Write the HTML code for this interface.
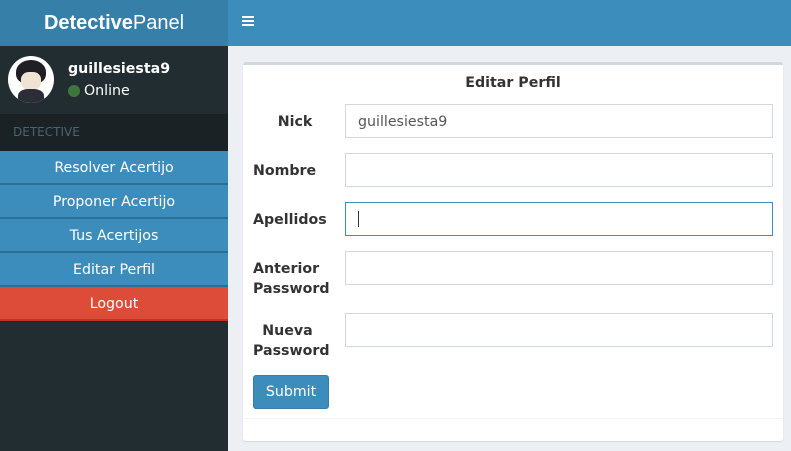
<!DOCTYPE html>
<html><head><style>
*{box-sizing:border-box;margin:0;padding:0}
body{width:791px;height:451px;overflow:hidden;background:#ecf0f5;font-family:"DejaVu Sans",sans-serif;font-size:14px;color:#333;position:relative}
.abs{position:absolute}
.logo{left:0;top:0;width:228px;height:46px;background:#367fa9;color:#fff;font-family:"Liberation Sans",sans-serif;font-size:20px;text-align:center;line-height:46px}
.nav{left:228px;top:0;right:0;height:46px;background:#3c8dbc}
.side{left:0;top:46px;width:228px;bottom:0;background:#222d32}
.hdr{left:0;top:114px;width:228px;height:37px;background:#1a2226;color:#4b646f;font-size:12px;padding-left:13px;line-height:36px}
.mi{left:0;width:228px;height:34px;background:#3c8dbc;color:#fff;text-align:center;line-height:34px;border-bottom:2px solid #2a6f98;font-size:14.2px}
.box{left:243px;top:62px;width:540px;height:379px;background:#fff;border-top:3px solid #d2d6de;border-radius:3px;box-shadow:0 1px 1px rgba(0,0,0,.1)}
.in{left:345px;width:428px;height:34px;border:1px solid #d2d6de;background:#fff;padding-left:12px;line-height:34px;color:#555;font-size:14.2px}
.lb{font-weight:bold;text-align:center;width:84px;left:245px;line-height:20px;font-size:14.2px}
</style></head><body>
<div class="abs logo"><b>Detective</b>Panel</div>
<div class="abs nav"><div class="abs" style="left:14px;top:16px;width:12px">
<div style="height:2px;background:#fff;margin-bottom:2px"></div><div style="height:2px;background:#fff;margin-bottom:2px"></div><div style="height:2px;background:#fff"></div></div></div>
<div class="abs side"></div>
<div class="abs" style="left:8px;top:56px;width:46px;height:47px;border-radius:50%;background:#fff;overflow:hidden">
<div class="abs" style="left:8px;top:4px;width:30px;height:24px;border-radius:50% 50% 40% 40%;background:#1f1f25"></div>
<div class="abs" style="left:13px;top:16px;width:20px;height:18px;border-radius:40%;background:#f1e3d3"></div>
<div class="abs" style="left:10px;top:33px;width:26px;height:16px;background:#2b2e38;border-radius:40% 40% 0 0"></div></div>
<div class="abs" style="left:68px;top:61px;color:#fff;font-weight:bold;font-size:14.2px">guillesiesta9</div>
<div class="abs" style="left:68px;top:85px;width:12px;height:12px;border-radius:50%;background:#3c763d"></div>
<div class="abs" style="left:84px;top:83px;color:#fff;font-size:14.2px">Online</div>
<div class="abs hdr">DETECTIVE</div>
<div class="abs mi" style="top:151px">Resolver Acertijo</div>
<div class="abs mi" style="top:185px">Proponer Acertijo</div>
<div class="abs mi" style="top:219px">Tus Acertijos</div>
<div class="abs mi" style="top:253px">Editar Perfil</div>
<div class="abs mi" style="top:287px;background:#dd4b39;border-bottom-color:#c23321">Logout</div>
<div class="abs box"></div>
<div class="abs" style="left:243px;width:540px;top:75px;text-align:center;font-weight:bold;font-size:14.2px">Editar Perfil</div>
<div class="abs lb" style="top:112px;left:253px;width:84px">Nick</div>
<div class="abs in" style="top:104px">guillesiesta9</div>
<div class="abs lb" style="top:161px;left:253px;width:auto">Nombre</div>
<div class="abs in" style="top:153px"></div>
<div class="abs lb" style="top:210px;left:253px;width:auto">Apellidos</div>
<div class="abs in" style="top:202px;border-color:#3c8dbc"><div class="abs" style="left:12px;top:8px;width:1px;height:16px;background:#333"></div></div>
<div class="abs lb" style="top:259px;left:253px;width:auto;text-align:left">Anterior<br>Password</div>
<div class="abs in" style="top:251px"></div>
<div class="abs lb" style="top:321px;left:253px;width:69px">Nueva<br>Password</div>
<div class="abs in" style="top:313px"></div>
<div class="abs" style="left:253px;top:375px;width:76px;height:34px;background:#3c8dbc;border:1px solid #367fa9;border-radius:3px;color:#fff;text-align:center;line-height:33px;font-size:14.2px">Submit</div>
<div class="abs" style="left:243px;top:418px;width:540px;height:1px;background:#f4f4f4"></div>
</body></html>
